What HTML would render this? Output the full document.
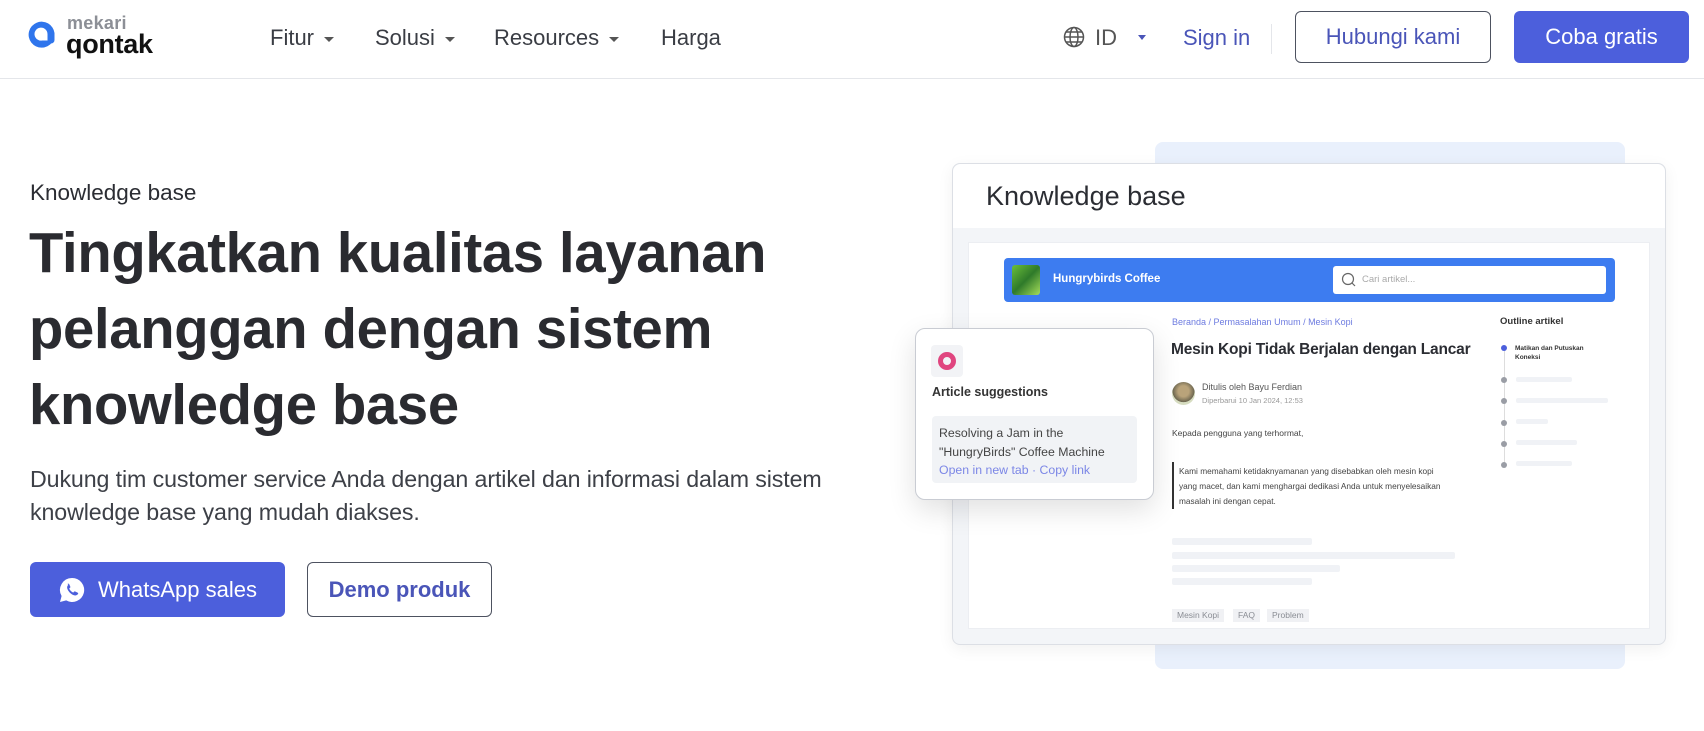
<!DOCTYPE html>
<html><head><meta charset="utf-8"><style>
*{margin:0;padding:0;box-sizing:border-box}
body{width:1704px;height:731px;overflow:hidden;background:#fff;font-family:"Liberation Sans",sans-serif;color:#2b2d33;position:relative}
.a{position:absolute;white-space:nowrap}
.nav{font-size:22px;color:#3a3d44;top:25px}
.caret{display:inline-block;width:0;height:0;border-left:5px solid transparent;border-right:5px solid transparent;border-top:5px solid #555;vertical-align:middle;margin-left:10px}
.btn{position:absolute;border-radius:6px;font-size:22px;display:flex;align-items:center;justify-content:center}
.ph{position:absolute;height:7px;background:#f0f2f6;border-radius:2px}
.dot{position:absolute;width:6px;height:6px;border-radius:3px;background:#9a9da5;left:1501px}
.tag{position:absolute;top:609px;height:13px;background:#f0f1f4;font-size:8.5px;color:#8a8d94;padding:1px 5px;line-height:11px}
</style></head><body>
<div class="a" style="left:0;top:78px;width:1704px;height:1px;background:#e4e6ea"></div>
<svg class="a" style="left:25px;top:19px" width="32" height="30" viewBox="0 0 32 30"><path d="M27 23.5 A13 13 0 1 1 29.5 14 L29.5 21 A3.5 3.5 0 0 1 22.5 21 L22.5 15 A6.5 6.5 0 1 0 17 21.5 L27 21.5 Z" fill="#2f75ec"/></svg>
<div class="a" style="left:67px;top:13px;font-size:18px;color:#8c8f96;font-weight:bold;letter-spacing:.3px">mekari</div>
<div class="a" style="left:66px;top:29px;font-size:27px;color:#111;font-weight:bold;letter-spacing:-.3px">qontak</div>
<div class="a nav" style="left:270px">Fitur<span class="caret"></span></div>
<div class="a nav" style="left:375px">Solusi<span class="caret"></span></div>
<div class="a nav" style="left:494px">Resources<span class="caret"></span></div>
<div class="a nav" style="left:661px">Harga</div>
<svg class="a" style="left:1063px;top:26px" width="22" height="22" viewBox="0 0 22 22" fill="none" stroke="#555" stroke-width="1.5"><circle cx="11" cy="11" r="9.5"/><ellipse cx="11" cy="11" rx="4" ry="9.5"/><path d="M1.5 11h19M3 6h16M3 16h16"/></svg>
<div class="a nav" style="left:1095px;color:#555">ID</div>
<div class="a" style="left:1138px;top:35px;border-left:4px solid transparent;border-right:4px solid transparent;border-top:5px solid #4a55b8"></div>
<div class="a nav" style="left:1183px;color:#4a55b8">Sign in</div>
<div class="a" style="left:1271px;top:24px;width:1px;height:30px;background:#e4e6ea"></div>
<div class="btn" style="left:1295px;top:11px;width:196px;height:52px;border:1px solid #4d5260;color:#4a55b8">Hubungi kami</div>
<div class="btn" style="left:1514px;top:11px;width:175px;height:52px;background:#4c5fdc;color:#fff">Coba gratis</div>

<div class="a" style="left:30px;top:180px;font-size:22.5px;color:#2b2d33">Knowledge base</div>
<div class="a" style="left:29px;top:215px;font-size:56.2px;font-weight:bold;line-height:76px;color:#2a2b30;letter-spacing:-.3px">Tingkatkan kualitas layanan<br>pelanggan dengan sistem<br>knowledge base</div>
<div class="a" style="left:30px;top:463px;font-size:23.2px;line-height:33px;color:#3d4047;letter-spacing:-.1px">Dukung tim customer service Anda dengan artikel dan informasi dalam sistem<br>knowledge base yang mudah diakses.</div>
<div class="btn" style="left:30px;top:562px;width:255px;height:55px;background:#4c5fdc;color:#fff;font-size:22px">
<svg width="28" height="28" viewBox="0 0 28 28" style="margin-right:12px"><path d="M14 2a12 12 0 0 0-10.4 18L2 26l6.2-1.6A12 12 0 1 0 14 2z" fill="#fff"/><path d="M9.5 8c.4-.5 1.3-.5 1.6 0l1.2 2.6c.2.4 0 .9-.3 1.2l-.8.8c.8 1.700 2.300 3.2 4 4l.8-.8c.3-.3.8-.5 1.2-.3l2.6 1.2c.5.3.5 1.2 0 1.6-1 1-2.4 1.5-3.8 1-3-1-5.7-3.7-6.7-6.7-.5-1.4 0-2.8 1-3.8z" fill="#4c5fdc"/></svg>WhatsApp sales</div>
<div class="btn" style="left:307px;top:562px;width:185px;height:55px;border:1px solid #4d5260;color:#4a55b8;font-weight:bold">Demo produk</div>

<div class="a" style="left:1155px;top:142px;width:470px;height:527px;background:#e9f0fc;border-radius:8px"></div>
<div class="a" style="left:952px;top:163px;width:714px;height:482px;background:#f3f5f8;border:1px solid #dcdfe5;border-radius:8px;box-shadow:0 4px 16px rgba(0,0,0,.06)"></div>
<div class="a" style="left:953px;top:164px;width:712px;height:64px;background:#fff;border-radius:8px 8px 0 0"></div>
<div class="a" style="left:986px;top:181px;font-size:27px;color:#2b2d33">Knowledge base</div>
<div class="a" style="left:968px;top:242px;width:682px;height:387px;background:#fff;border:1px solid #eceef2"></div>
<div class="a" style="left:1004px;top:258px;width:611px;height:44px;background:#3d7cf0;border-radius:4px"></div>
<div class="a" style="left:1012px;top:265px;width:28px;height:30px;background:linear-gradient(135deg,#6bbf3a,#2f7a2a 50%,#a6dd5b);border-radius:3px"></div>
<div class="a" style="left:1053px;top:273px;font-size:11.5px;color:#fff;font-weight:bold">Hungrybirds Coffee</div>
<div class="a" style="left:1333px;top:266px;width:273px;height:28px;background:#fff;border-radius:3px"></div>
<svg class="a" style="left:1341px;top:272px" width="16" height="16" viewBox="0 0 16 16" fill="none" stroke="#666" stroke-width="1.2"><circle cx="7" cy="7" r="5.5"/><path d="M11 11l3 3"/></svg>
<div class="a" style="left:1362px;top:274px;font-size:9.5px;color:#aaa">Cari artikel...</div>
<div class="a" style="left:1172px;top:317px;font-size:9px;color:#6d7be0">Beranda / Permasalahan Umum / Mesin Kopi</div>
<div class="a" style="left:1171px;top:341px;font-size:15.5px;color:#2b2d33;font-weight:bold;letter-spacing:-.2px">Mesin Kopi Tidak Berjalan dengan Lancar</div>
<div class="a" style="left:1172px;top:382px;width:23px;height:23px;border-radius:12px;background:radial-gradient(circle at 50% 40%,#b9a37a 30%,#6c6650 60%,#d6dcc0 62%)"></div>
<div class="a" style="left:1202px;top:382px;font-size:9px;color:#555">Ditulis oleh Bayu Ferdian</div>
<div class="a" style="left:1202px;top:396px;font-size:7.5px;color:#999">Diperbarui 10 Jan 2024, 12:53</div>
<div class="a" style="left:1172px;top:428px;font-size:8.5px;color:#444">Kepada pengguna yang terhormat,</div>
<div class="a" style="left:1172px;top:462px;width:2px;height:47px;background:#333"></div>
<div class="a" style="left:1179px;top:464px;font-size:8.3px;color:#444;line-height:15px">Kami memahami ketidaknyamanan yang disebabkan oleh mesin kopi<br>yang macet, dan kami menghargai dedikasi Anda untuk menyelesaikan<br>masalah ini dengan cepat.</div>
<div class="ph" style="left:1172px;top:538px;width:140px"></div>
<div class="ph" style="left:1172px;top:552px;width:283px"></div>
<div class="ph" style="left:1172px;top:565px;width:168px"></div>
<div class="ph" style="left:1172px;top:578px;width:140px"></div>
<div class="tag" style="left:1172px">Mesin Kopi</div>
<div class="tag" style="left:1233px">FAQ</div>
<div class="tag" style="left:1267px">Problem</div>
<div class="a" style="left:1500px;top:316px;font-size:9.5px;color:#333;font-weight:bold">Outline artikel</div>
<div class="a" style="left:1504px;top:350px;width:1px;height:115px;background:#ddd"></div>
<div class="dot" style="top:345px;background:#4c5fdc"></div>
<div class="a" style="left:1515px;top:344px;font-size:6.5px;color:#333;line-height:9px;font-weight:bold">Matikan dan Putuskan<br>Koneksi</div>
<div class="dot" style="top:377px"></div><div class="ph" style="left:1516px;top:377px;width:56px;height:5px"></div>
<div class="dot" style="top:398px"></div><div class="ph" style="left:1516px;top:398px;width:92px;height:5px"></div>
<div class="dot" style="top:420px"></div><div class="ph" style="left:1516px;top:419px;width:32px;height:5px"></div>
<div class="dot" style="top:441px"></div><div class="ph" style="left:1516px;top:440px;width:61px;height:5px"></div>
<div class="dot" style="top:462px"></div><div class="ph" style="left:1516px;top:461px;width:56px;height:5px"></div>

<div class="a" style="left:915px;top:328px;width:239px;height:172px;background:#fff;border:1px solid #c9ccd3;border-radius:10px;box-shadow:0 10px 28px rgba(0,0,0,.12)"></div>
<div class="a" style="left:931px;top:345px;width:32px;height:32px;background:#f2f3f6;border-radius:4px"></div>
<div class="a" style="left:938px;top:352px;width:18px;height:18px;border-radius:9px;border:5px solid #e0457f"></div>
<div class="a" style="left:932px;top:385px;font-size:12.5px;color:#333;font-weight:bold">Article suggestions</div>
<div class="a" style="left:932px;top:416px;width:205px;height:67px;background:#f1f3f6;border-radius:4px"></div>
<div class="a" style="left:939px;top:424px;font-size:12.3px;color:#444;line-height:18.5px">Resolving a Jam in the<br>"HungryBirds" Coffee Machine<br><span style="color:#7b86e6">Open in new tab · Copy link</span></div>
</body></html>
